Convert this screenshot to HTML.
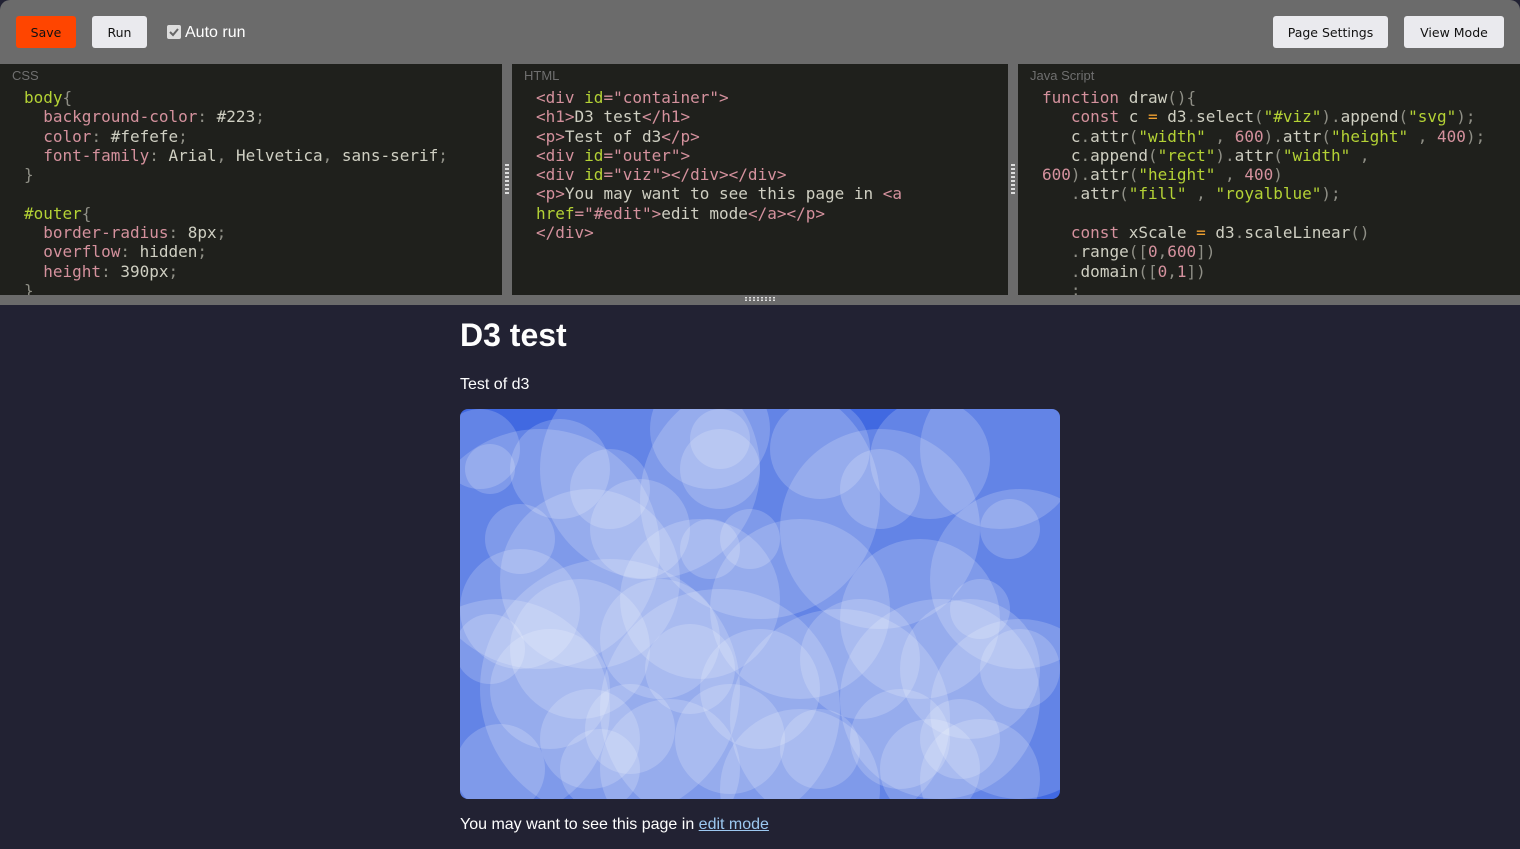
<!DOCTYPE html>
<html><head><meta charset="utf-8"><style>
*{box-sizing:border-box;margin:0;padding:0}
html,body{width:1520px;height:849px;overflow:hidden;background:#222233}
.wrap{position:absolute;left:0;top:0;width:1520px;height:849px;border-radius:10px 10px 0 0;overflow:hidden;background:#222233}
.top{position:absolute;left:0;top:0;width:1520px;height:64px;background:#6b6b6b}
.btn{position:absolute;top:16px;height:32px;border-radius:3px;font:12.5px "DejaVu Sans","Liberation Sans",sans-serif;display:flex;align-items:center;justify-content:center;color:#111}
.ed{position:absolute;top:64px;height:231px;background:#1f201c;overflow:hidden;font-family:"DejaVu Sans Mono","Liberation Mono",monospace;font-size:16px;line-height:19.3px;color:#cfcfc2;white-space:pre}
.lab{position:absolute;top:4px;left:12px;font:13px "Liberation Sans",sans-serif;color:#6f6f6f}
.code{position:absolute;top:24px;left:24px}
.k{color:#d4919d}.g{color:#b4d235}.p{color:#8f8f86}.n{color:#d4919d}.o{color:#f0a030}
.split{position:absolute;top:64px;width:10px;height:231px;background:#6b6b6b}
.grip{position:absolute;left:3px;top:100px;width:4px;height:30px;background:repeating-linear-gradient(#ddd 0 2px,transparent 2px 4px)}
.hbar{position:absolute;left:0;top:295px;width:1520px;height:10px;background:#6b6b6b}
.prev{position:absolute;left:460px;top:305px;font-family:"Liberation Sans",Arial,sans-serif;color:#fefefe}
h1{font-size:32px;font-weight:bold;position:absolute;top:12px;left:0;white-space:nowrap}
.t{position:absolute;top:71px;left:0;font-size:16px;white-space:nowrap}
.viz{position:absolute;top:104px;left:0;width:600px;height:390px;border-radius:8px;overflow:hidden}
.b{position:absolute;top:511px;left:0;font-size:16px;white-space:nowrap}
.b a{color:#9cc8f0;text-decoration:underline}
</style></head><body><div class="wrap">
<div class="top">
<div class="btn" style="left:16px;width:60px;background:#ff4500">Save</div>
<div class="btn" style="left:92px;width:55px;background:#eaeaee">Run</div>
<div style="position:absolute;left:167px;top:25px;width:14px;height:14px;background:#ddd;border-radius:2px"><svg width="14" height="14"><path d="M3 7l3 3 5-6" stroke="#666" stroke-width="2" fill="none"/></svg></div>
<div style="position:absolute;left:185px;top:24px;font:16px 'Liberation Sans',sans-serif;color:#fff">Auto run</div>
<div class="btn" style="left:1273px;width:115px;background:#eaeaee">Page Settings</div>
<div class="btn" style="left:1404px;width:100px;background:#eaeaee">View Mode</div>
</div>
<div class="ed" style="left:0;width:502px"><div class="lab">CSS</div><div class="code"><span class="g">body</span><span class="p">{</span>
  <span class="k">background-color</span><span class="p">:</span> #223<span class="p">;</span>
  <span class="k">color</span><span class="p">:</span> #fefefe<span class="p">;</span>
  <span class="k">font-family</span><span class="p">:</span> Arial<span class="p">,</span> Helvetica<span class="p">,</span> sans-serif<span class="p">;</span>
<span class="p">}</span>

<span class="g">#outer</span><span class="p">{</span>
  <span class="k">border-radius</span><span class="p">:</span> 8px<span class="p">;</span>
  <span class="k">overflow</span><span class="p">:</span> hidden<span class="p">;</span>
  <span class="k">height</span><span class="p">:</span> 390px<span class="p">;</span>
<span class="p">}</span></div></div>
<div class="split" style="left:502px"><div class="grip"></div></div>
<div class="ed" style="left:512px;width:496px"><div class="lab">HTML</div><div class="code"><span class="k">&lt;div</span> <span class="g">id</span><span class="k">=</span><span class="k">"container"</span><span class="k">&gt;</span>
<span class="k">&lt;h1&gt;</span>D3 test<span class="k">&lt;/h1&gt;</span>
<span class="k">&lt;p&gt;</span>Test of d3<span class="k">&lt;/p&gt;</span>
<span class="k">&lt;div</span> <span class="g">id</span><span class="k">="outer"&gt;</span>
<span class="k">&lt;div</span> <span class="g">id</span><span class="k">="viz"&gt;&lt;/div&gt;&lt;/div&gt;</span>
<span class="k">&lt;p&gt;</span>You may want to see this page in <span class="k">&lt;a</span>
<span class="g">href</span><span class="k">="#edit"&gt;</span>edit mode<span class="k">&lt;/a&gt;&lt;/p&gt;</span>
<span class="k">&lt;/div&gt;</span></div></div>
<div class="split" style="left:1008px"><div class="grip"></div></div>
<div class="ed" style="left:1018px;width:502px"><div class="lab">Java Script</div><div class="code"><span class="k">function</span> draw<span class="p">(){</span>
   <span class="k">const</span> c <span class="o">=</span> d3<span class="p">.</span>select<span class="p">(</span><span class="g">"#viz"</span><span class="p">).</span>append<span class="p">(</span><span class="g">"svg"</span><span class="p">);</span>
   c<span class="p">.</span>attr<span class="p">(</span><span class="g">"width"</span> <span class="p">,</span> <span class="n">600</span><span class="p">).</span>attr<span class="p">(</span><span class="g">"height"</span> <span class="p">,</span> <span class="n">400</span><span class="p">);</span>
   c<span class="p">.</span>append<span class="p">(</span><span class="g">"rect"</span><span class="p">).</span>attr<span class="p">(</span><span class="g">"width"</span> <span class="p">,</span>
<span class="n">600</span><span class="p">).</span>attr<span class="p">(</span><span class="g">"height"</span> <span class="p">,</span> <span class="n">400</span><span class="p">)</span>
   <span class="p">.</span>attr<span class="p">(</span><span class="g">"fill"</span> <span class="p">,</span> <span class="g">"royalblue"</span><span class="p">);</span>

   <span class="k">const</span> xScale <span class="o">=</span> d3<span class="p">.</span>scaleLinear<span class="p">()</span>
   <span class="p">.</span>range<span class="p">([</span><span class="n">0</span><span class="p">,</span><span class="n">600</span><span class="p">])</span>
   <span class="p">.</span>domain<span class="p">([</span><span class="n">0</span><span class="p">,</span><span class="n">1</span><span class="p">])</span>
   <span class="p">;</span></div></div>
<div class="hbar"><div style="position:absolute;left:745px;top:2px;width:30px;height:4px;background:repeating-linear-gradient(90deg,#ddd 0 2px,transparent 2px 4px);-webkit-mask:linear-gradient(#000 0 1.5px,transparent 1.5px 2.5px,#000 2.5px)"></div></div>
<div class="prev">
<h1>D3 test</h1>
<div class="t">Test of d3</div>
<div class="viz"><svg width="600" height="390"><rect width="600" height="390" fill="#4169e1"/>
<g fill="#fff" fill-opacity="0.18">
<circle cx="80" cy="140" r="120"/><circle cx="190" cy="60" r="110"/><circle cx="300" cy="90" r="120"/><circle cx="420" cy="120" r="100"/><circle cx="540" cy="40" r="80"/><circle cx="560" cy="170" r="90"/><circle cx="40" cy="300" r="110"/><circle cx="150" cy="280" r="130"/><circle cx="260" cy="300" r="120"/><circle cx="380" cy="310" r="110"/><circle cx="480" cy="290" r="100"/><circle cx="560" cy="300" r="90"/><circle cx="130" cy="170" r="90"/><circle cx="240" cy="190" r="80"/><circle cx="340" cy="200" r="90"/><circle cx="460" cy="210" r="80"/><circle cx="100" cy="60" r="50"/><circle cx="250" cy="20" r="60"/><circle cx="470" cy="50" r="60"/><circle cx="20" cy="40" r="40"/><circle cx="210" cy="360" r="70"/><circle cx="340" cy="380" r="80"/><circle cx="520" cy="370" r="60"/><circle cx="60" cy="200" r="60"/><circle cx="400" cy="250" r="60"/><circle cx="180" cy="120" r="50"/><circle cx="300" cy="280" r="60"/><circle cx="510" cy="260" r="70"/>
<circle cx="260" cy="60" r="40"/><circle cx="90" cy="280" r="60"/><circle cx="130" cy="330" r="50"/><circle cx="550" cy="120" r="30"/><circle cx="30" cy="60" r="25"/><circle cx="290" cy="130" r="30"/><circle cx="360" cy="40" r="50"/><circle cx="440" cy="330" r="50"/>
<circle cx="120" cy="240" r="70"/><circle cx="200" cy="230" r="60"/><circle cx="270" cy="330" r="55"/><circle cx="150" cy="80" r="40"/><circle cx="470" cy="360" r="50"/><circle cx="40" cy="360" r="45"/><circle cx="230" cy="260" r="45"/><circle cx="500" cy="330" r="40"/><circle cx="170" cy="320" r="45"/><circle cx="60" cy="130" r="35"/><circle cx="420" cy="80" r="40"/><circle cx="560" cy="260" r="40"/><circle cx="140" cy="360" r="40"/><circle cx="520" cy="200" r="30"/><circle cx="260" cy="30" r="30"/><circle cx="30" cy="240" r="35"/><circle cx="360" cy="340" r="40"/><circle cx="250" cy="140" r="30"/>
</g></svg></div>
<div class="b">You may want to see this page in <a>edit mode</a></div>
</div>
</div></body></html>
